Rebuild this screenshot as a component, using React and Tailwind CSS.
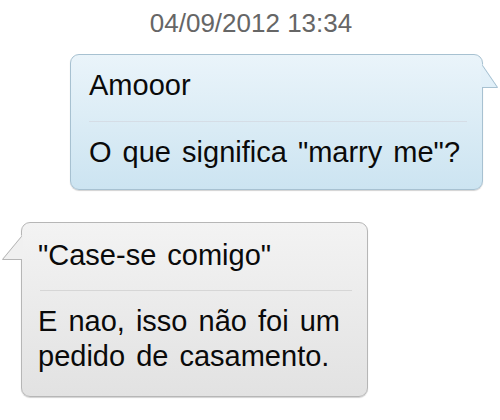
export default function App() {
  const font = { fontFamily: '"Liberation Sans", Arial, sans-serif' };
  return (
    <div className="w-[500px] h-[420px] bg-white overflow-hidden relative" style={font}>
      <div className="pt-[8px] flex justify-center">
        <span className="text-[26px] leading-[30px] text-[#666] pl-[2px]">04/09/2012 13:34</span>
      </div>
      <div className="ml-[70px] mt-[16px] w-[413px] relative">
        <div className="rounded-[9px] border border-[#a7c1d1] bg-linear-to-b from-[#eaf4fa] to-[#cce4f1] shadow-[0_1px_1px_rgba(0,0,0,0.18)] text-[29px] leading-[35px] text-[#0a0a0a] [word-spacing:3px]">
          <div className="pl-[18px] pt-[13px] pb-[18px]">Amooor</div>
          <div className="h-px ml-[18px] mr-[15px] bg-[#d5dde6]" />
          <div className="pl-[18px] pt-[13px] pb-[19px]">O que significa "marry me"?</div>
        </div>
        <svg className="absolute right-[-16px] top-[10px]" width="18" height="25" viewBox="0 0 18 25">
          <defs>
            <linearGradient id="bt" x1="0" y1="0" x2="0" y2="1">
              <stop offset="0" stopColor="#e6f2f9" />
              <stop offset="1" stopColor="#e0eff8" />
            </linearGradient>
          </defs>
          <path d="M0 0 L2 0 L2 1 L17 23 L2 23 L0 23 Z" fill="url(#bt)" />
          <path d="M1.5 0.5 L1.5 1.5 L16.5 23.5 L1.5 23.5" fill="none" stroke="#a7c1d1" strokeWidth="1" />
        </svg>
      </div>
      <div className="ml-[21px] mt-[32px] w-[347px] relative">
        <div className="rounded-[9px] border border-[#b6b6b6] bg-linear-to-b from-[#f3f3f3] to-[#e2e2e2] shadow-[0_1px_1px_rgba(0,0,0,0.18)] text-[29px] leading-[35px] text-[#0a0a0a] [word-spacing:3px]">
          <div className="pl-[16px] pt-[15px] pb-[17px]">"Case-se comigo"</div>
          <div className="h-px ml-[18px] mr-[15px] bg-[#d6d6d6]" />
          <div className="pl-[16px] pt-[13px] pb-[22px]">
            E nao, isso não foi um
            <br />
            pedido de casamento.
          </div>
        </div>
        <svg className="absolute left-[-20px] top-[13px]" width="22" height="26" viewBox="0 0 22 26">
          <path d="M22 0 L20 0 L20 1 L1 24 L20 24 L22 24 Z" fill="#f0f0f0" />
          <path d="M20.5 0.5 L20.5 1.5 L1.5 24.5 L20.5 24.5" fill="none" stroke="#b6b6b6" strokeWidth="1" />
        </svg>
      </div>
    </div>
  );
}
